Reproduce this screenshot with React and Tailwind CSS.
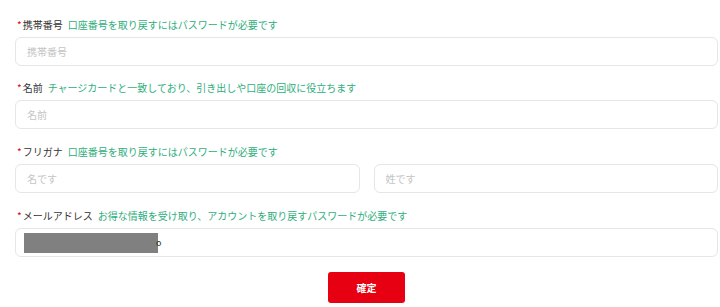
import { useState } from "react";

const FONT = { fontFamily: '"Noto Sans CJK JP", "Noto Sans", sans-serif' };

function Label({ label, hint }) {
  return (
    <div className="mb-[5px] flex h-[14px] items-center text-[10px] leading-[14px]">
      <span className="ml-[2px] mr-[1px] text-[#e60012]">*</span>
      <span className="text-[#333333]">{label}</span>
      <span className="ml-[5px] text-[#2fae7d]">{hint}</span>
    </div>
  );
}

function Field({ placeholder }) {
  return (
    <input
      placeholder={placeholder}
      className="h-[29px] w-full rounded-[6px] border border-[#e6e6e6] bg-white px-[11px] text-[10px] text-[#333] outline-none placeholder:text-[#c4c4c4]"
      style={FONT}
    />
  );
}

export default function App() {
  const [done, setDone] = useState(false);

  return (
    <div className="h-[307px] w-[720px] overflow-hidden bg-white pl-[15px] pr-[2px] pt-[18px]" style={FONT}>
      <div className="mb-[15px]">
        <Label label="携帯番号" hint="口座番号を取り戻すにはパスワードが必要です" />
        <Field placeholder="携帯番号" />
      </div>

      <div className="mb-[16px]">
        <Label label="名前" hint="チャージカードと一致しており、引き出しや口座の回収に役立ちます" />
        <Field placeholder="名前" />
      </div>

      <div className="mb-[16px]">
        <Label label="フリガナ" hint="口座番号を取り戻すにはパスワードが必要です" />
        <div className="grid grid-cols-2 gap-[14px]">
          <Field placeholder="名です" />
          <Field placeholder="姓です" />
        </div>
      </div>

      <div className="mb-[15px]">
        <Label label="メールアドレス" hint="お得な情報を受け取り、アカウントを取り戻すパスワードが必要です" />
        <div className="flex h-[29px] w-full items-center rounded-[6px] border border-[#e6e6e6] bg-white pl-[8px]">
          <span className="h-[20px] w-[134px] bg-[#808080]" />
          <span className="-ml-[2px] text-[9px] leading-none text-[#333]">o</span>
        </div>
      </div>

      <div className="flex justify-center">
        <button
          onClick={() => setDone(!done)}
          className="h-[31px] w-[77px] rounded-[3px] bg-[#e60012] text-[10px] font-bold text-white"
        >
          確定
        </button>
      </div>
    </div>
  );
}
